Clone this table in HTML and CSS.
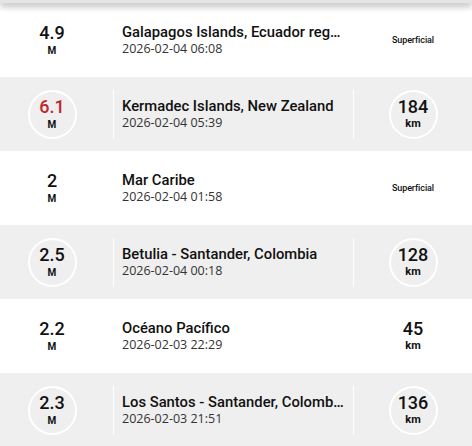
FILE: index.html
```html
<!DOCTYPE html>
<html>
<head>
<meta charset="utf-8">
<link rel="stylesheet" href="styles.css">
</head>
<body>
<div class="header"></div>
<div class="list">
  <div class="row">
    <div class="mag"><div class="ring"><span class="num">4.9</span><span class="unit">M</span></div></div>
    <div class="sep"></div>
    <div class="info"><div class="title">Galapagos Islands, Ecuador reg…</div><div class="date">2026-02-04 06:08</div></div>
    <div class="sep"></div>
    <div class="depth"><div class="ring"><span class="sup">Superficial</span></div></div>
  </div>
  <div class="row alt">
    <div class="mag"><div class="ring"><span class="num red">6.1</span><span class="unit">M</span></div></div>
    <div class="sep"></div>
    <div class="info"><div class="title">Kermadec Islands, New Zealand</div><div class="date">2026-02-04 05:39</div></div>
    <div class="sep"></div>
    <div class="depth"><div class="ring"><span class="num">184</span><span class="unit km">km</span></div></div>
  </div>
  <div class="row">
    <div class="mag"><div class="ring"><span class="num">2</span><span class="unit">M</span></div></div>
    <div class="sep"></div>
    <div class="info"><div class="title">Mar Caribe</div><div class="date">2026-02-04 01:58</div></div>
    <div class="sep"></div>
    <div class="depth"><div class="ring"><span class="sup">Superficial</span></div></div>
  </div>
  <div class="row alt">
    <div class="mag"><div class="ring"><span class="num">2.5</span><span class="unit">M</span></div></div>
    <div class="sep"></div>
    <div class="info"><div class="title">Betulia - Santander, Colombia</div><div class="date">2026-02-04 00:18</div></div>
    <div class="sep"></div>
    <div class="depth"><div class="ring"><span class="num">128</span><span class="unit km">km</span></div></div>
  </div>
  <div class="row">
    <div class="mag"><div class="ring"><span class="num">2.2</span><span class="unit">M</span></div></div>
    <div class="sep"></div>
    <div class="info"><div class="title">Océano Pacífico</div><div class="date">2026-02-03 22:29</div></div>
    <div class="sep"></div>
    <div class="depth"><div class="ring"><span class="num">45</span><span class="unit km">km</span></div></div>
  </div>
  <div class="row alt">
    <div class="mag"><div class="ring"><span class="num">2.3</span><span class="unit">M</span></div></div>
    <div class="sep"></div>
    <div class="info"><div class="title">Los Santos - Santander, Colomb…</div><div class="date">2026-02-03 21:51</div></div>
    <div class="sep"></div>
    <div class="depth"><div class="ring"><span class="num">136</span><span class="unit km">km</span></div></div>
  </div>
</div>
</body>
</html>
```
FILE: styles.css
```css
* { box-sizing: border-box; }
html, body { margin: 0; padding: 0; background: #fff; overflow: hidden; }
body { font-family: Roboto, "Liberation Sans", sans-serif; color: #111; width: 472px; height: 446px; }
.header {
  height: 3px;
  background: #e4e4e4;
  box-shadow: 0 2px 7px rgba(0,0,0,0.55);
  position: relative;
  z-index: 2;
}
.list { display: flex; flex-direction: column; }
.row {
  height: 74px;
  display: flex;
  align-items: center;
  background: #fff;
}
.row.alt { background: #efefef; }
.mag { width: 104px; display: flex; justify-content: center; }
.sep { width: 1px; height: 49px; background: #fff; flex: none; }
.mag + .sep { margin-left: 9px; }
.ring {
  width: 49px; height: 49px;
  border-radius: 50%;
  border: 2px solid #fff;
  display: flex; flex-direction: column; align-items: center; justify-content: center;
}
.num { font-size: 18px; font-weight: 500; line-height: 18px; color: #111; }
.num.red { color: #c0272d; }
.unit { font-size: 10px; font-weight: 700; line-height: 12px; margin-top: 3px; color: #111; }
.unit.km { font-size: 11px; margin-top: 2px; }
.info {
  flex: 1;
  min-width: 0;
  padding: 0 2px 0 8px;
  display: flex; flex-direction: column;
}
.title {
  font-size: 14.8px; font-weight: 500; line-height: 17px; color: #111;
  white-space: nowrap;
}
.date {
  font-family: "Open Sans", "Noto Sans", sans-serif;
  font-size: 12.5px; line-height: 15px; color: #333;
}
.depth { width: 118px; display: flex; justify-content: center; }
.sup { font-size: 9px; font-weight: 500; color: #111; letter-spacing: -0.1px; }
```
